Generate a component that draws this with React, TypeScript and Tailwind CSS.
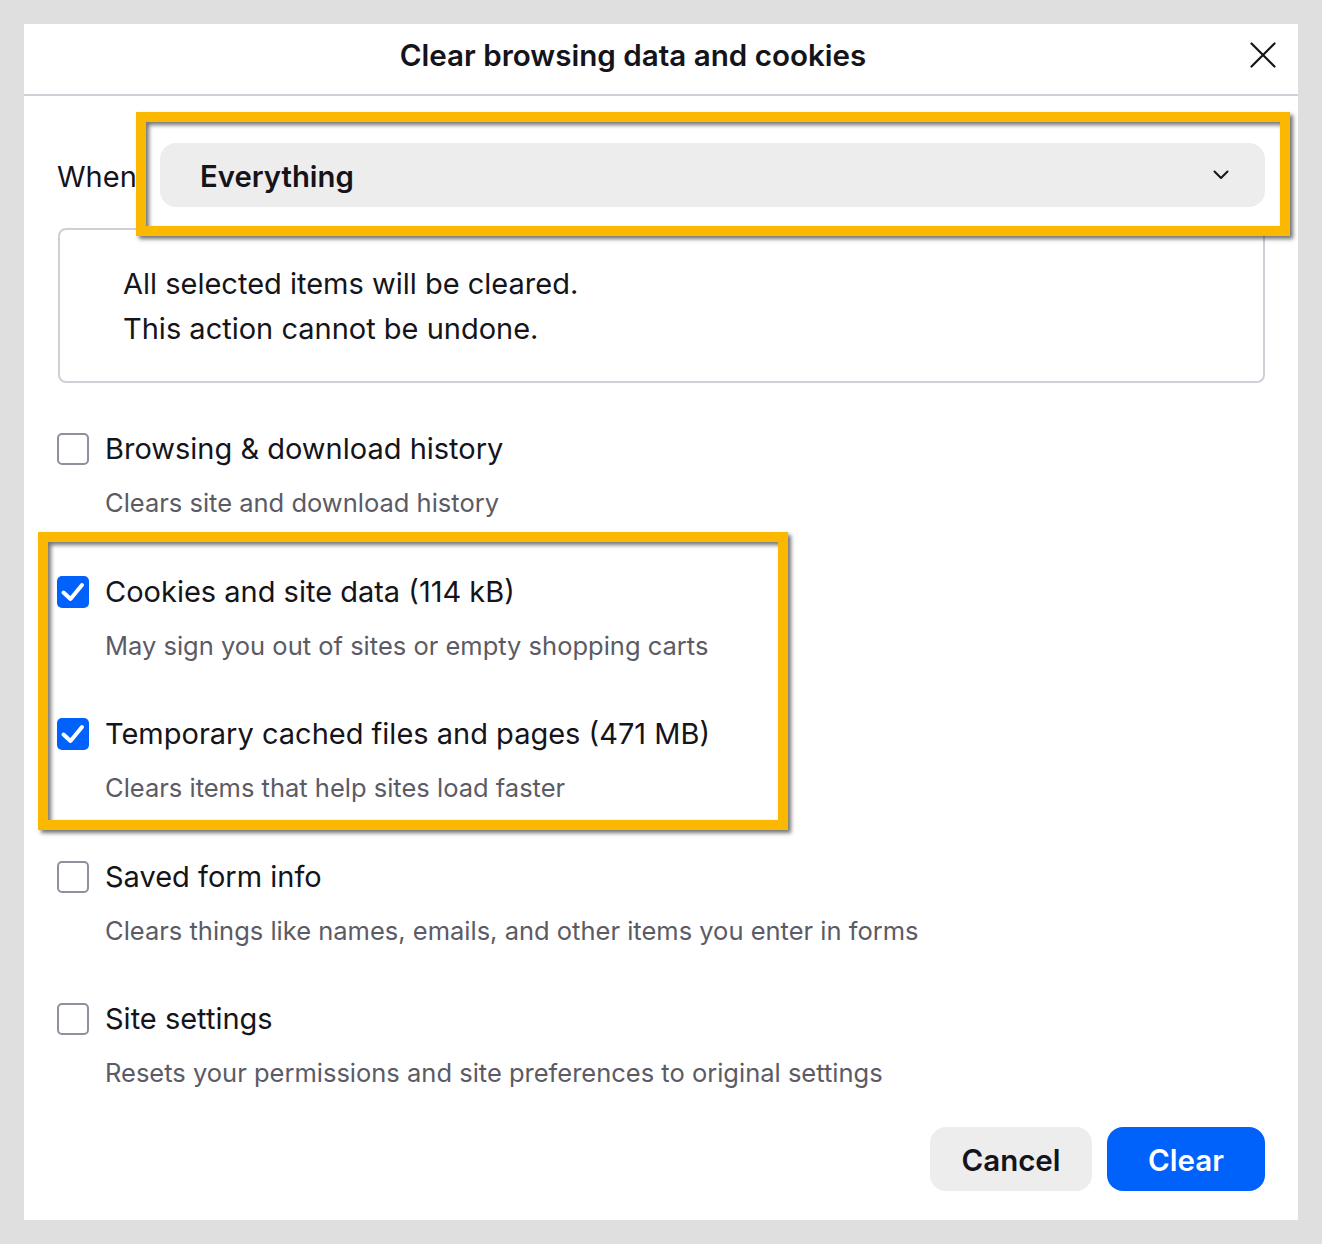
import { useState } from "react";

const ITEMS = [
  { id: "history", label: "Browsing & download history", desc: "Clears site and download history", checked: false },
  { id: "cookies", label: "Cookies and site data (114 kB)", desc: "May sign you out of sites or empty shopping carts", checked: true },
  { id: "cache", label: "Temporary cached files and pages (471 MB)", desc: "Clears items that help sites load faster", checked: true },
  { id: "forms", label: "Saved form info", desc: "Clears things like names, emails, and other items you enter in forms", checked: false },
  { id: "settings", label: "Site settings", desc: "Resets your permissions and site preferences to original settings", checked: false },
];

function Checkbox({ checked, onClick }: { checked: boolean; onClick: () => void }) {
  return (
    <button
      type="button"
      onClick={onClick}
      className={
        checked
          ? "w-8 h-8 shrink-0 rounded-[5px] bg-[#0062fa]"
          : "w-8 h-8 shrink-0 rounded-[5px] border-2 border-[#8f8f9d] bg-white"
      }
    >
      {checked && (
        <svg width="32" height="32" viewBox="0 0 32 32" fill="none">
          <path d="M6.5 16.5l7 6.5L25 9" stroke="white" strokeWidth="4" strokeLinecap="round" strokeLinejoin="round" />
        </svg>
      )}
    </button>
  );
}

export default function App() {
  const [checked, setChecked] = useState<Record<string, boolean>>(
    Object.fromEntries(ITEMS.map((i) => [i.id, i.checked]))
  );

  return (
    <main className="min-h-screen bg-[#dfdfdf] p-6 font-['Inter',sans-serif] text-[#15141a]">
      <div className="relative w-[1274px] h-[1196px] bg-white flex flex-col">
        <div className="h-[72px] shrink-0 border-b-2 border-[#cfcfd8] flex items-center justify-center pr-[56px] relative">
          <h1 className="text-[29.6px] font-semibold -mt-[8px]">Clear browsing data and cookies</h1>
          <button type="button" className="absolute right-[19px] top-[15px] w-8 h-8 flex items-center justify-center">
            <svg width="26" height="26" viewBox="0 0 26 26" fill="none">
              <path d="M1.5 1.5l23 23M24.5 1.5l-23 23" stroke="#15141a" strokeWidth="2.2" strokeLinecap="round" />
            </svg>
          </button>
        </div>

        <div className="flex-1 flex flex-col pl-[33px] pr-[33px] pt-[47px] pb-[29px]">
          <div className="flex items-center">
            <span className="text-[29px] w-[103px] shrink-0 pt-[4px]">When</span>
            <div className="flex-1 h-16 rounded-[16px] bg-[#ededed] flex items-center justify-between pl-10 pr-[36px]">
              <span className="text-[29.3px] font-semibold pt-[4px]">Everything</span>
              <svg width="16" height="10" viewBox="0 0 16 10" fill="none">
                <path d="M1.5 1.5L8 8l6.5-6.5" stroke="#15141a" strokeWidth="2" strokeLinecap="round" strokeLinejoin="round" />
              </svg>
            </div>
          </div>

          <div className="mt-[21px] ml-px h-[155px] rounded-[8px] border-2 border-[#cfcfd8] pl-[63px] pt-[31px] text-[29px] leading-[45px]">
            <p>All selected items will be cleared.</p>
            <p>This action cannot be undone.</p>
          </div>

          <div className="mt-[48px] flex flex-col">
            {ITEMS.map((item, i) => (
              <div key={item.id} className={i > 0 ? "mt-[52.5px]" : ""}>
                <div className="flex items-center gap-4 h-9">
                  <Checkbox
                    checked={checked[item.id]}
                    onClick={() => setChecked({ ...checked, [item.id]: !checked[item.id] })}
                  />
                  <span className="text-[29px] leading-9">{item.label}</span>
                </div>
                <p className="mt-[18px] ml-12 text-[25.5px] leading-9 text-[#5b5b66]">{item.desc}</p>
              </div>
            ))}
          </div>

          <div className="mt-auto flex justify-end gap-[15px]">
            <button type="button" className="h-16 w-[162px] rounded-[16px] bg-[#ededed] text-[29.5px] font-semibold pt-[2px]">
              Cancel
            </button>
            <button type="button" className="h-16 w-[158px] rounded-[16px] bg-[#0062fa] text-white text-[29.5px] font-semibold pt-[2px]">
              Clear
            </button>
          </div>
        </div>

        <div className="absolute left-[112px] top-[88px] w-[1154px] h-[124px] border-[10px] border-[#fbb800] shadow-[3px_3px_4px_rgba(0,0,0,0.55),inset_3px_3px_4px_rgba(0,0,0,0.55)] pointer-events-none" />
        <div className="absolute left-[14px] top-[508px] w-[750px] h-[298px] border-[10px] border-[#fbb800] shadow-[3px_3px_4px_rgba(0,0,0,0.55),inset_3px_3px_4px_rgba(0,0,0,0.55)] pointer-events-none" />
      </div>
    </main>
  );
}
